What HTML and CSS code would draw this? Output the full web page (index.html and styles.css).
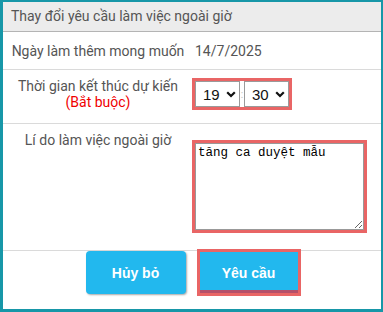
FILE: index.html
```html
<!DOCTYPE html>
<html lang="vi">
<head>
<meta charset="utf-8">
<title>Thay đổi yêu cầu làm việc ngoài giờ</title>
<link rel="stylesheet" href="styles.css">
</head>
<body>
<div class="dialog">
  <div class="dlg-header">Thay đổi yêu cầu làm việc ngoài giờ</div>
  <div class="form">
    <div class="row row-date">
      <div class="label">Ngày làm thêm mong muốn</div>
      <div class="value">14/7/2025</div>
    </div>
    <div class="row row-time">
      <div class="label">Thời gian kết thúc dự kiến<br><span class="required">(Bắt buộc)</span></div>
      <div class="value">
        <div class="time-box highlight">
          <div class="select-wrap">
            <select class="sel"><option>19</option></select>
            <svg class="chev" width="10" height="7" viewBox="0 0 10 7"><path d="M1.2 1.2 L5 5 L8.8 1.2" fill="none" stroke="#111" stroke-width="2.2"/></svg>
          </div>
          <span class="colon">:</span>
          <div class="select-wrap">
            <select class="sel"><option>30</option></select>
            <svg class="chev" width="10" height="7" viewBox="0 0 10 7"><path d="M1.2 1.2 L5 5 L8.8 1.2" fill="none" stroke="#111" stroke-width="2.2"/></svg>
          </div>
        </div>
      </div>
    </div>
    <div class="row row-reason">
      <div class="label">Lí do làm việc ngoài giờ</div>
      <div class="value">
        <textarea class="reason highlight">tăng ca duyệt mẫu</textarea>
      </div>
    </div>
  </div>
  <div class="actions">
    <button class="btn">Hủy bỏ</button>
    <button class="btn btn-hl">Yêu cầu</button>
  </div>
</div>
</body>
</html>
```

FILE: styles.css
```css
html, body {
  margin: 0;
  padding: 0;
  background: #fff;
}
.dialog {
  box-sizing: border-box;
  width: 383px;
  height: 312px;
  border-style: solid;
  border-color: #1797a8;
  border-width: 2px 2px 3px 3px;
  background: #fff;
  font-family: Roboto, "Noto Sans", sans-serif;
  font-size: 14px;
  color: #555;
}
.dlg-header {
  height: 29px;
  line-height: 29px;
  background: #ececec;
  border-bottom: 1px solid #b4b4b4;
  padding-left: 8px;
  font-size: 14px;
  color: #555;
}
.row {
  display: grid;
  grid-template-columns: 190px 1fr;
  border-bottom: 1px solid #dadada;
  box-sizing: content-box;
}
.label {
  text-align: center;
  line-height: 16px;
}
.value {
  padding-left: 2px;
}
.row-date {
  height: 37px;
  align-items: center;
}
.row-time {
  height: 53px;
}
.row-time .label {
  padding-top: 8px;
}
.row-time .value {
  padding-top: 11px;
}
.required {
  color: #f00000;
}
.row-reason {
  height: 126px;
}
.row-reason .label {
  padding-top: 8px;
}
.row-reason .value {
  padding-top: 19px;
}
.highlight {
  outline: 3px solid #e96565;
}
.time-box {
  display: inline-flex;
  align-items: center;
  height: 26px;
  vertical-align: top;
}
.select-wrap {
  position: relative;
  height: 26px;
}
.sel {
  appearance: none;
  -webkit-appearance: none;
  box-sizing: border-box;
  width: 45px;
  height: 26px;
  margin: 0;
  border: 1px solid #9a9a9a;
  border-radius: 0;
  background: #fff;
  padding: 0 0 0 7px;
  font-family: "Liberation Sans", Arial, sans-serif;
  font-size: 15px;
  color: #111;
}
.chev {
  position: absolute;
  right: 4px;
  top: 10px;
  pointer-events: none;
}
.colon {
  width: 4px;
  text-align: center;
  font-size: 10px;
  color: #bbb;
}
.reason {
  box-sizing: border-box;
  width: 169px;
  height: 87px;
  margin: 0;
  border: 1px solid #999;
  padding: 2px;
  font-family: "Liberation Mono", "DejaVu Sans Mono", monospace;
  font-size: 12.5px;
  color: #000;
  display: block;
}
.actions {
  display: flex;
  justify-content: center;
  gap: 13px;
  padding-top: 0;
}
.btn {
  width: 100px;
  height: 43px;
  margin: 0;
  border: none;
  border-radius: 4px;
  background: #22b8ee;
  color: #fff;
  font-family: "Liberation Sans", Arial, sans-serif;
  font-weight: bold;
  font-size: 14px;
  box-shadow: 1px 1px 2px rgba(0, 0, 0, 0.35);
}
.btn-hl {
  border-radius: 0;
  outline: 3px solid #e96565;
  outline-offset: -1px;
  box-shadow: inset 0 -4px 0 #b5506a;
}
```
